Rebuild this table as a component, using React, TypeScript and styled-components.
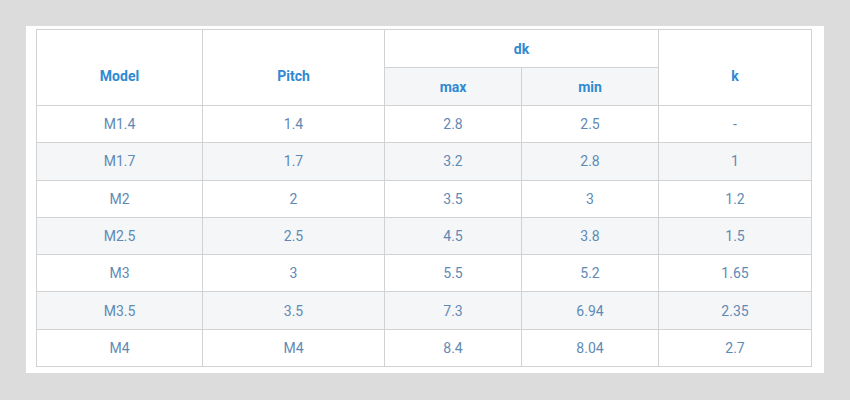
import * as React from "react";
import styled, { createGlobalStyle } from "styled-components";

const GlobalStyle = createGlobalStyle`
  html, body {
    margin: 0;
    padding: 0;
    background: #dcdcdc;
    font-family: Roboto, "Liberation Sans", sans-serif;
  }
`;

const Page = styled.div`
  width: 850px;
  height: 400px;
  padding: 26px 0 0 26px;
  box-sizing: border-box;
`;

const Panel = styled.div`
  width: 798px;
  height: 347px;
  background: #ffffff;
  padding: 3px 13px 7px 10px;
  box-sizing: border-box;
`;

const Table = styled.table`
  width: 776px;
  border-collapse: collapse;
  table-layout: fixed;
  border: 1px solid #d2d2d2;
`;

const HeadCell = styled.th<{ $sub?: boolean; $tall?: boolean }>`
  border: 1px solid #d2d2d2;
  height: 37px;
  padding: ${p => (p.$tall ? "16px 0 0" : "0")};
  text-align: center;
  font-size: 14px;
  font-weight: 700;
  color: #2f8ad2;
  background: ${p => (p.$sub ? "#f5f6f8" : "#ffffff")};
`;

const Row = styled.tr<{ $striped: boolean }>`
  background: ${p => (p.$striped ? "#f5f6f8" : "#ffffff")};
`;

const Cell = styled.td`
  border: 1px solid #d2d2d2;
  height: 36.3px;
  padding: 0;
  text-align: center;
  font-size: 14px;
  color: #5f8ab4;
`;

const rows = [
  ["M1.4", "1.4", "2.8", "2.5", "-"],
  ["M1.7", "1.7", "3.2", "2.8", "1"],
  ["M2", "2", "3.5", "3", "1.2"],
  ["M2.5", "2.5", "4.5", "3.8", "1.5"],
  ["M3", "3", "5.5", "5.2", "1.65"],
  ["M3.5", "3.5", "7.3", "6.94", "2.35"],
  ["M4", "M4", "8.4", "8.04", "2.7"]
];

export default function App() {
  return (
    <Page>
      <GlobalStyle />
      <Panel>
        <Table>
          <colgroup>
            <col style={{ width: 166 }} />
            <col style={{ width: 182 }} />
            <col style={{ width: 137 }} />
            <col style={{ width: 137 }} />
            <col style={{ width: 153 }} />
          </colgroup>
          <thead>
            <tr>
              <HeadCell rowSpan={2} $tall>Model</HeadCell>
              <HeadCell rowSpan={2} $tall>Pitch</HeadCell>
              <HeadCell colSpan={2}>dk</HeadCell>
              <HeadCell rowSpan={2} $tall>k</HeadCell>
            </tr>
            <tr>
              <HeadCell $sub>max</HeadCell>
              <HeadCell $sub>min</HeadCell>
            </tr>
          </thead>
          <tbody>
            {rows.map((r, i) => (
              <Row key={r[0]} $striped={i % 2 === 1}>
                {r.map((v, j) => (
                  <Cell key={j}>{v}</Cell>
                ))}
              </Row>
            ))}
          </tbody>
        </Table>
      </Panel>
    </Page>
  );
}
